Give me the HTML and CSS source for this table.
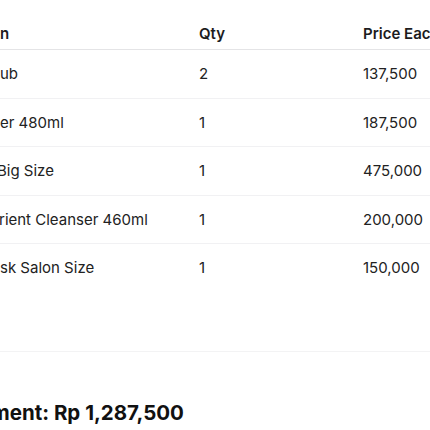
FILE: index.html
```html
<!DOCTYPE html>
<html>
<head>
<meta charset="utf-8">
<link rel="stylesheet" href="styles.css">
</head>
<body>
<div class="page">
  <table class="items">
    <colgroup>
      <col class="c-item"><col class="c-qty"><col class="c-price">
    </colgroup>
    <thead>
      <tr><th>n</th><th>Qty</th><th>Price Each</th></tr>
    </thead>
    <tbody>
      <tr><td>ub</td><td>2</td><td>137,500</td></tr>
      <tr><td>er 480ml</td><td>1</td><td>187,500</td></tr>
      <tr><td class="cut">Big Size</td><td>1</td><td>475,000</td></tr>
      <tr><td class="cut2">rient Cleanser 460ml</td><td>1</td><td>200,000</td></tr>
      <tr><td>sk Salon Size</td><td>1</td><td>150,000</td></tr>
    </tbody>
  </table>
  <div class="total-wrap">
    <h2 class="total">ment: Rp 1,287,500</h2>
  </div>
</div>
</body>
</html>
```
FILE: styles.css
```css
html, body {
  margin: 0;
  padding: 0;
  background: #fff;
  overflow: hidden;
}
body {
  font-family: Inter, "Noto Sans", sans-serif;
  color: #1c1c1e;
  width: 430px;
  height: 430px;
}
.page {
  padding-top: 18px;
  width: 430px;
}
.items {
  width: 470px;
  border-collapse: collapse;
  table-layout: fixed;
  font-size: 15px;
}
.c-item { width: 199px; }
.c-qty { width: 164px; }
.c-price { width: 107px; }
.items th {
  text-align: left;
  font-weight: 600;
  height: 31px;
  padding: 0;
  vertical-align: middle;
  white-space: nowrap;
  border-bottom: 1px solid #e4e4e6;
  line-height: 18px;
}
.items td {
  padding: 1px 0 0;
  height: 46.5px;
  vertical-align: middle;
  white-space: nowrap;
  border-bottom: 1px solid #f1f1f3;
  line-height: 18px;
  color: #222;
}
.items tbody tr:last-child td {
  border-bottom: none;
}
.cut { text-indent: -3px; }
.cut2 { text-indent: -1px; }
.total-wrap {
  margin-top: 59px;
  border-top: 1px solid #f3f3f4;
  padding-top: 48px;
}
.total {
  margin: 0 0 0 -9px;
  font-size: 20.5px;
  font-weight: 700;
  line-height: 26px;
  white-space: nowrap;
  color: #111;
}
```
